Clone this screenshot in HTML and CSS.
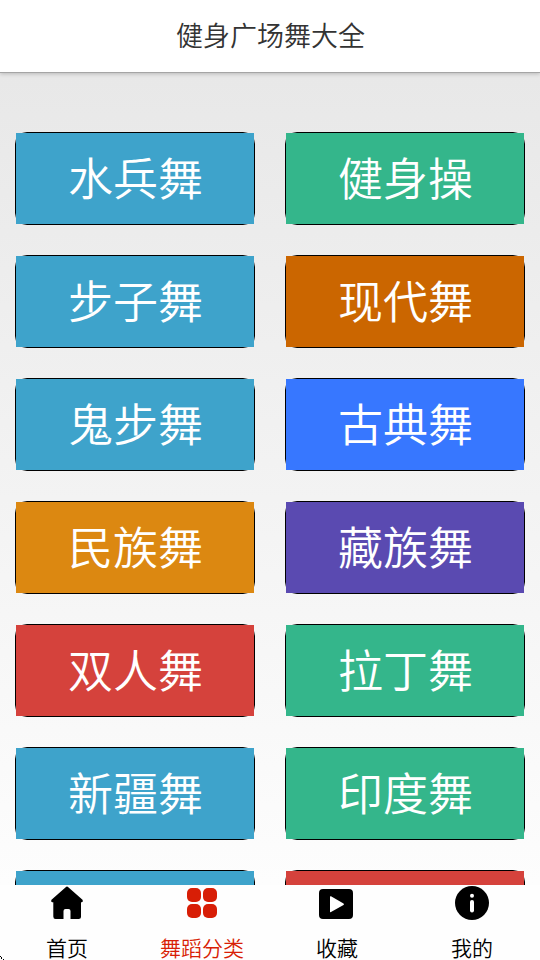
FILE: index.html
```
<!DOCTYPE html>
<html lang="zh-CN">
<head>
<meta charset="utf-8">
<title>健身广场舞大全</title>
<link rel="stylesheet" href="styles.css">
</head>
<body>
<div class="app">
  <header class="header"><h1>健身广场舞大全</h1></header>
  <main class="content">
    <div class="grid">
      <a class="tile"><span class="fill sky">水兵舞</span></a>
      <a class="tile"><span class="fill green">健身操</span></a>
      <a class="tile"><span class="fill sky">步子舞</span></a>
      <a class="tile"><span class="fill brown">现代舞</span></a>
      <a class="tile"><span class="fill sky">鬼步舞</span></a>
      <a class="tile"><span class="fill blue">古典舞</span></a>
      <a class="tile"><span class="fill orange">民族舞</span></a>
      <a class="tile"><span class="fill purple">藏族舞</span></a>
      <a class="tile"><span class="fill red">双人舞</span></a>
      <a class="tile"><span class="fill green">拉丁舞</span></a>
      <a class="tile"><span class="fill sky">新疆舞</span></a>
      <a class="tile"><span class="fill green">印度舞</span></a>
      <a class="tile"><span class="fill sky"></span></a>
      <a class="tile"><span class="fill red"></span></a>
    </div>
  </main>
  <nav class="tabs">
    <a class="tab">
      <svg class="icon" viewBox="0 0 36 36"><path d="M16.700 2.200Q18 .8 19.300 2.200L33.500 14.800Q34.600 16.500 33 17.300H32V31.500Q32 34 29.500 34H21.500V26Q21.500 24 19.500 24H16.500Q14.500 24 14.500 26V34H6.500Q4.300 34 4.300 31.500V17.300H3Q1.400 16.500 2.500 14.800Z"/></svg>
      <span>首页</span>
    </a>
    <a class="tab active">
      <svg class="icon" viewBox="0 0 36 36"><rect x="3" y="3" width="14" height="14" rx="5"/><rect x="19" y="3" width="14" height="14" rx="5"/><rect x="3" y="19" width="14" height="14" rx="5"/><rect x="19" y="19" width="14" height="14" rx="5"/></svg>
      <span>舞蹈分类</span>
    </a>
    <a class="tab">
      <svg class="icon" viewBox="0 0 36 36"><path fill-rule="evenodd" d="M4 4H30Q34 4 34 8V30Q34 34 30 34H4Q0 34 0 30V8Q0 4 4 4ZM11 12V26.500Q11 27.700 12 27L24.500 20Q25.500 19.200 24.500 18.500L12 11.300Q11 10.800 11 12Z"/></svg>
      <span>收藏</span>
    </a>
    <a class="tab">
      <svg class="icon" viewBox="0 0 36 36"><circle cx="18" cy="18" r="17"/><circle class="mark" cx="18" cy="10.800" r="2"/><rect class="mark" x="16" y="15" width="4" height="12.500" rx="2"/></svg>
      <span>我的</span>
    </a>
  </nav>
  <svg class="corner" viewBox="0 0 4 4"><path d="M0 0h1v1H0zM1 1h1v1H1zM1 2h1v1H1zM3 3h1v1H3z"/></svg>
</div>
</body>
</html>
```
FILE: styles.css
```
* { box-sizing: border-box; }
body {
  margin: 0;
  font-family: "Noto Sans CJK SC", sans-serif;
}
.app {
  position: relative;
  display: flex;
  flex-direction: column;
  height: 960px;
  overflow: hidden;
  background: linear-gradient(#e6e6e6, #ffffff);
}
.header {
  position: relative;
  flex: none;
  height: 72px;
  display: flex;
  align-items: center;
  justify-content: center;
  padding: 0 0 2px 1px;
  background: #fff;
  box-shadow: 0 1px 0 #a5a5a5, 0 2px 4px rgba(0, 0, 0, .2);
}
h1 {
  margin: 0;
  font-size: 27px;
  line-height: 40px;
  font-weight: 350;
  color: #333;
}
.content {
  flex: 1;
  min-height: 0;
  overflow: hidden;
  padding: 60px 15px 0;
}
.grid {
  display: grid;
  grid-template-columns: 1fr 1fr;
  grid-auto-rows: 93px;
  gap: 30px;
}
.tile {
  display: flex;
  border: 1px solid #000;
  border-radius: 12px;
}
.fill {
  flex: 1;
  display: flex;
  justify-content: center;
  padding-left: 1px;
  font-size: 45px;
  line-height: 87px;
  font-weight: 350;
  color: #fff;
}
.sky { background: #3ea3cb; }
.green { background: #34b68b; }
.brown { background: #cb6600; }
.blue { background: #3777ff; }
.orange { background: #dc8811; }
.purple { background: #5a4ab1; }
.red { background: #d5423c; }
.tabs {
  flex: none;
  height: 75px;
  display: grid;
  grid-template-columns: repeat(4, 135px);
  background: #fefefe;
}
.tab {
  display: flex;
  flex-direction: column;
  align-items: center;
  padding-right: 1px;
  font-size: 21px;
  line-height: 22px;
  font-weight: 350;
  color: #000;
}
.icon {
  width: 36px;
  height: 36px;
  margin-bottom: 15px;
  fill: currentColor;
}
.mark { fill: #fff; }
.active { color: #d81e06; }
.corner {
  position: absolute;
  left: 0;
  bottom: 0;
  width: 4px;
  height: 4px;
}
```
